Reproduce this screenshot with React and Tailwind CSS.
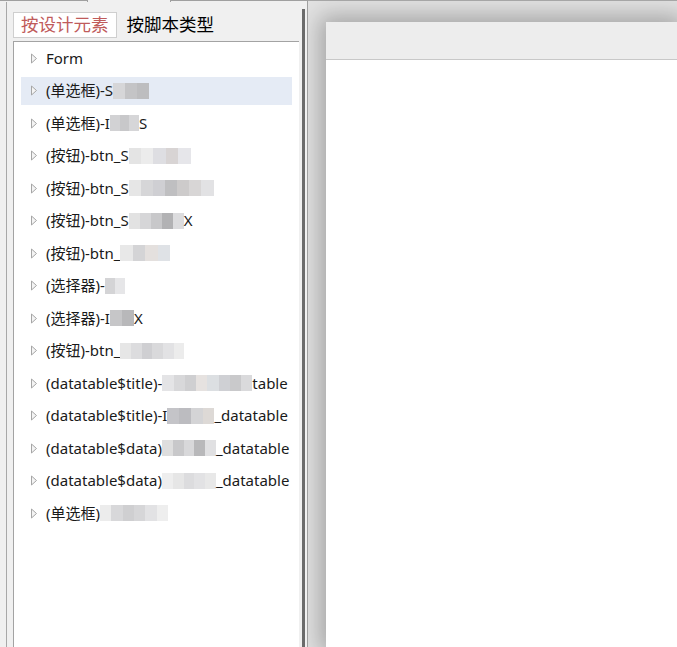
import React from 'react';

const FONT = { fontFamily: '"Noto Sans", "Noto Sans CJK SC", sans-serif' };

// blurred (mosaic) name fragments, as grey cells
const Blur = ({ w, cells }) => (
    <span className="inline-flex h-[16px] items-stretch align-middle" style={{ width: w }}>
        {cells.map((c, i) => (
            <span key={i} className="flex-1 h-full" style={{ background: c }} />
        ))}
    </span>
);

const rows = [
    { parts: ['Form'] },
    { parts: ['(单选框)-S', [36, ['#d6d6d8', '#c4c4c6', '#bdbdbf']]], active: true },
    { parts: ['(单选框)-I', [29, ['#d2d2d4', '#c8c8ca', '#d6d6d8']], 'S'] },
    { parts: ['(按钮)-btn_S', [62, ['#e4e4e4', '#ececec', '#dedee2', '#d8d4d4', '#e6e6ea']]] },
    { parts: ['(按钮)-btn_S', [85, ['#e6e6e6', '#d6d6d8', '#cfcfd3', '#bfbfc1', '#cdcbcb', '#d8d6d6', '#e2e2e4']]] },
    { parts: ['(按钮)-btn_S', [55, ['#e2e2e2', '#d6d6d8', '#c8c8ca', '#b2b2b4', '#dcdcde']], 'X'] },
    { parts: ['(按钮)-btn_', [50, ['#e8e8e8', '#d4d4d6', '#e4e0de', '#dfe2e6']]] },
    { parts: ['(选择器)-', [20, ['#d4d4d6', '#e6e6e8']]] },
    { parts: ['(选择器)-I', [24, ['#c6c6c8', '#b8b8ba']], 'X'] },
    { parts: ['(按钮)-btn_', [64, ['#e6e6e6', '#dcdcde', '#cfcfd2', '#d9d9db', '#e2e2e4', '#ececec']]] },
    { parts: ['(datatable$title)-', [90, ['#e4e4e6', '#d8d8da', '#cfcfd1', '#e6e2e0', '#dcdfe2', '#cfd0d4', '#c9c9cb', '#dadadc']], 'table'] },
    { parts: ['(datatable$title)-I', [47, ['#c4c4c8', '#bcbcc0', '#d4d4d6', '#ddd9d6']], '_datatable'] },
    { parts: ['(datatable$data)', [54, ['#dedede', '#c8c8ca', '#d8d8da', '#b8b8ba', '#e0e0e2']], '_datatable'] },
    { parts: ['(datatable$data)', [54, ['#eeeeee', '#e6e6e6', '#dcdcde', '#e2e2e4', '#e8e8e8']], '_datatable'] },
    { parts: ['(单选框)', [68, ['#ececec', '#d8d8da', '#cfcfd1', '#d6d6d8', '#e2e2e4', '#eeeeee']]] },
];

const Arrow = () => (
    <svg width="8" height="11" viewBox="0 0 8 11" className="shrink-0">
        <path d="M1.5 1 L6.5 5.5 L1.5 10 Z" fill="#f4f4f4" stroke="#a6a6a6" strokeWidth="1" />
    </svg>
);

export default function App() {
    return (
        <div className="w-[677px] h-[647px] flex overflow-hidden bg-[#f0f0f0] text-[#1a1a1a]" style={FONT}>
            {/* left: element tree */}
            <div className="relative w-[307px] h-full flex flex-col shrink-0">
                {/* cut-off tab strip on top */}
                <div className="flex h-[2px] shrink-0">
                    <div className="w-[88px] border-t border-[#a0a0a0] border-r" />
                    <div className="w-[82px]" />
                    <div className="flex-1 border-t border-[#a0a0a0] border-l" />
                </div>
                <div className="flex flex-1 min-h-0">
                    <div className="w-[6px] shrink-0" />
                    <div className="w-px bg-[#a8a8a8] shrink-0" />
                    <div className="w-[6px] shrink-0" />
                    <div className="flex flex-col w-[286px] shrink-0">
                        <div className="flex items-center h-[26px] mt-[10px] mb-[3px] gap-[10px]">
                            <div className="h-[26px] px-[7px] flex items-center bg-white border border-[#cfcfcf] text-[17.5px] leading-none text-[#bf5b5b]">
                                按设计元素
                            </div>
                            <div className="text-[17.5px] leading-none text-black">按脚本类型</div>
                        </div>
                        <div className="flex-1 bg-white border-t border-l border-[#a3a3a3] pt-[2px]">
                            {rows.map((r, i) => (
                                <div
                                    key={i}
                                    className={`mx-[7px] h-[28px] mb-[4.5px] flex items-center pl-[9px] gap-[8px] text-[15px] whitespace-nowrap ${r.active ? 'bg-[#e5ebf5]' : ''}`}
                                >
                                    <Arrow />
                                    <span className="flex items-center">
                                        {r.parts.map((p, j) =>
                                            typeof p === 'string' ? <span key={j}>{p}</span> : <Blur key={j} w={p[0]} cells={p[1]} />
                                        )}
                                    </span>
                                </div>
                            ))}
                        </div>
                    </div>
                    <div className="w-[3px] shrink-0" />
                    {/* splitter grip */}
                    <div className="w-[3px] mt-[7px] bg-[#6b6b6b] shrink-0" />
                </div>
            </div>

            <div className="w-px h-full bg-[#a0a0a0] shrink-0" />

            {/* right: canvas with dropped-shadow panel */}
            <div className="flex-1 h-full flex flex-col bg-[#e2e2e2] overflow-hidden">
                <div className="h-px bg-[#a6a6a6] shrink-0" />
                <div className="flex-1 pl-[18px] pt-[21px] overflow-hidden">
                    <div className="h-full flex flex-col bg-white shadow-[0_0_22px_6px_rgba(0,0,0,0.28)]">
                        <div className="h-[38px] bg-[#ededed] border-b border-[#c8c8c8] shrink-0" />
                        <div className="flex-1 bg-white" />
                    </div>
                </div>
            </div>
        </div>
    );
}
